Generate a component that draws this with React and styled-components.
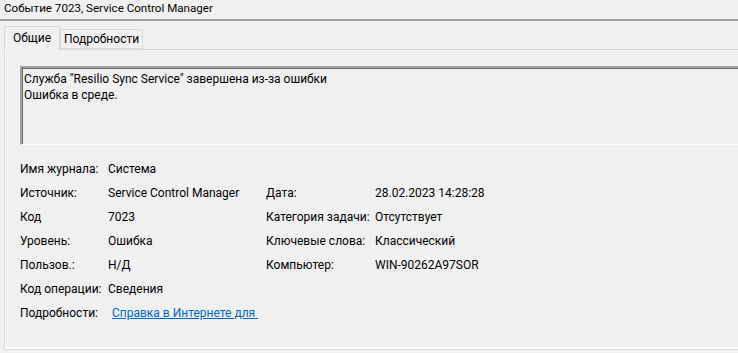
import React, { useState } from "react";
import styled, { createGlobalStyle } from "styled-components";

const GlobalStyle = createGlobalStyle`
  html, body {
    margin: 0;
    padding: 0;
    background: #f0f0f0;
    overflow: hidden;
  }
  body {
    font-family: Roboto, "Noto Sans", "Liberation Sans", sans-serif;
    font-size: 12px;
    color: #000;
  }
`;

const rows = [
  { label: "Имя журнала:", value: "Система" },
  { label: "Источник:", value: "Service Control Manager", label2: "Дата:", value2: "28.02.2023 14:28:28" },
  { label: "Код", value: "7023", label2: "Категория задачи:", value2: "Отсутствует" },
  { label: "Уровень:", value: "Ошибка", label2: "Ключевые слова:", value2: "Классический" },
  { label: "Пользов.:", value: "Н/Д", label2: "Компьютер:", value2: "WIN-90262A97SOR" },
  { label: "Код операции:", value: "Сведения" },
];

export default function App() {
  // active tab
  const [tab, setTab] = useState(0);
  const tabs = ["Общие", "Подробности"];

  return (
    <Window>
      <GlobalStyle />
      <Title>Событие 7023, Service Control Manager</Title>
      <Body>
        <TabStrip>
          {tabs.map((t, i) => (
            <Tab key={t} active={tab === i} onClick={() => setTab(i)}>
              {t}
            </Tab>
          ))}
        </TabStrip>
        <Panel>
          <Message>
            <div>Служба "Resilio Sync Service" завершена из-за ошибки</div>
            <div>Ошибка в среде.</div>
          </Message>
          <Props>
            {rows.map((r) => (
              <React.Fragment key={r.label}>
                <Cell>{r.label}</Cell>
                <Cell>{r.value}</Cell>
                <Cell>{r.label2 || ""}</Cell>
                <Cell>{r.value2 || ""}</Cell>
              </React.Fragment>
            ))}
            <Cell>Подробности:</Cell>
            <Cell $wide>
              <HelpLink href="#">Справка в Интернете для </HelpLink>
            </Cell>
          </Props>
        </Panel>
      </Body>
    </Window>
  );
}

// styling
const Window = styled.div`
  width: 738px;
  height: 353px;
  background: #f0f0f0;
  display: flex;
  flex-direction: column;
`;

const Title = styled.div`
  height: 19px;
  padding-left: 4px;
  line-height: 17px;
  font-size: 11.6px;
  border-bottom: 2px solid #a0a0a0;
  white-space: nowrap;
`;

const Body = styled.div`
  padding: 5px 0 0 4px;
  display: flex;
  flex-direction: column;
`;

const TabStrip = styled.div`
  display: flex;
  align-items: flex-end;
  height: 23px;
  position: relative;
  z-index: 1;
`;

const Tab = styled.div`
  box-sizing: border-box;
  height: ${(p) => (p.active ? "24px" : "20px")};
  margin-bottom: ${(p) => (p.active ? "-1px" : "0")};
  padding: ${(p) => (p.active ? "2px 8px 0 8px" : "0 3px")};
  line-height: ${(p) => (p.active ? "18px" : "19px")};
  background: #f0f0f0;
  border: 1px solid #d9d9d9;
  border-bottom: ${(p) => (p.active ? "none" : "1px solid #d9d9d9")};
  white-space: nowrap;
  cursor: default;
`;

const Panel = styled.div`
  box-sizing: border-box;
  height: 301px;
  border: 1px solid #d9d9d9;
  border-right: none;
  box-shadow: inset 1px 0 0 #fff, inset 0 -2px 0 #fff;
  padding: 16px 0 0 15px;
`;

const Message = styled.div`
  box-sizing: border-box;
  height: 79px;
  padding: 3px 2px;
  line-height: 16px;
  border-top: 2px solid #a0a0a0;
  border-left: 2px solid #a0a0a0;
  border-bottom: 1px solid #fff;
  box-shadow: inset 1px 1px 0 #696969;
  white-space: nowrap;
`;

const Props = styled.div`
  display: grid;
  grid-template-columns: 88px 158px 109px 1fr;
  grid-auto-rows: 24px;
  margin-top: 12px;
`;

const Cell = styled.div`
  display: flex;
  align-items: center;
  white-space: nowrap;
  grid-column: ${(p) => (p.$wide ? "span 3" : "auto")};
`;

const HelpLink = styled.a`
  color: #0066cc;
  text-decoration: underline;
  margin-left: 4px;
  white-space: pre;
`;
